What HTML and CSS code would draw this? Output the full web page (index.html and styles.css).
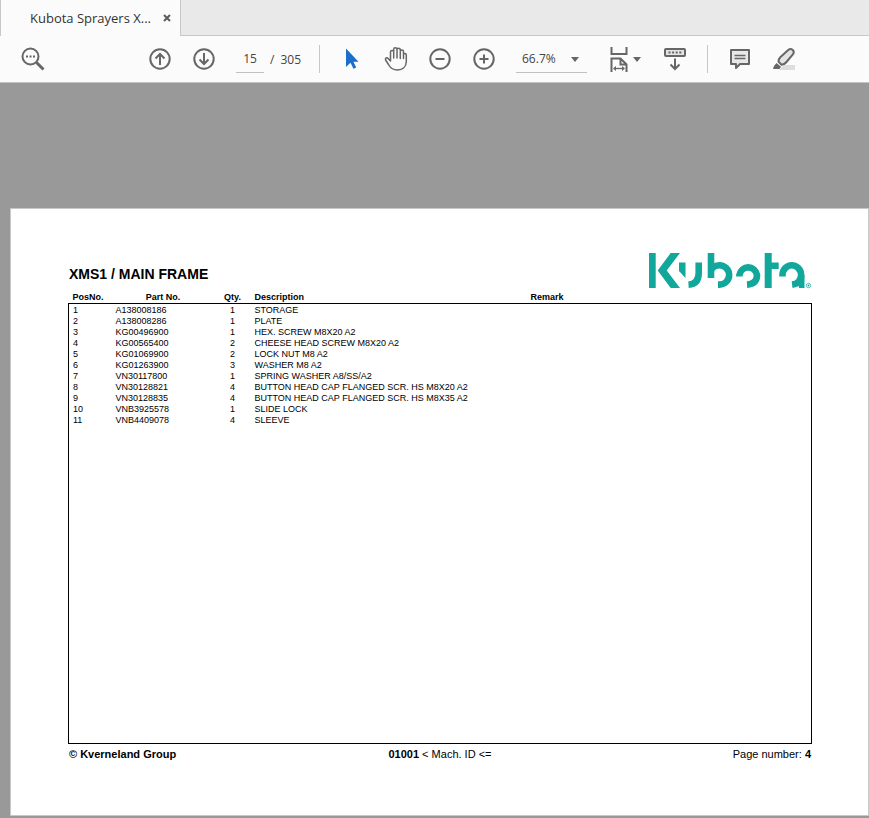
FILE: index.html
```html
<!DOCTYPE html>
<html lang="en">
<head>
    <meta charset="UTF-8">
    <meta name="viewport" content="width=device-width, initial-scale=1.0">
    <title>Kubota Sprayers XMS1</title>
    <link rel="stylesheet" href="styles.css">
</head>
<body>

    <nav class="tabs">
        <div class="tab">
            <a href="#sheet" class="tab-name">Kubota Sprayers X...</a>
            <button class="tab-close" aria-label="Close tab">
                <svg width="8" height="8" viewBox="0 0 8 8"><path d="M1 1l6 6M7 1l-6 6" stroke="#5c5c5c" stroke-width="2"/></svg>
            </button>
        </div>
    </nav>

    <div class="toolbar">
        <button class="tool search" aria-label="Find">
            <svg width="24" height="24" viewBox="0 0 24 24">
                <circle cx="9.500" cy="9.500" r="8"/>
                <path d="M15.500 15.500L22.500 22.500" stroke-width="3"/>
                <path d="M5 9.500h2M8.500 9.500h2M12 9.500h2"/>
            </svg>
        </button>
        <button class="tool" aria-label="Previous page">
            <svg width="24" height="24" viewBox="0 0 24 24"><circle cx="12" cy="12" r="9.700"/><path d="M12 18V7M7.500 11.500L12 7l4.500 4.500"/></svg>
        </button>
        <button class="tool" aria-label="Next page">
            <svg width="24" height="24" viewBox="0 0 24 24"><circle cx="12" cy="12" r="9.700"/><path d="M12 6v11M7.500 12.500L12 17l4.500-4.500"/></svg>
        </button>
        <div class="pager">
            <input type="text" class="page-input" value="15" aria-label="Page">
            <span>/</span>
            <span>305</span>
        </div>
        <span class="separator"></span>
        <button class="tool" aria-label="Select">
            <svg width="24" height="24" viewBox="0 0 24 24"><path d="M6 1.500V20l4.500-4.200 3 6 2.700-1.300-2.800-5.800H18.500z" fill="#1b6ec9" stroke="none"/></svg>
        </button>
        <button class="tool" aria-label="Hand">
            <svg width="24" height="24" viewBox="0 0 24 24">
                <path d="M6.500 14V5a1.500 1.500 0 0 1 3.200 0V11V2.500a1.600 1.600 0 0 1 3.300 0V11V2.800a1.600 1.600 0 0 1 3.300 0V11.500V4.500a1.600 1.600 0 0 1 3.200 0V11.500V8a1.400 1.400 0 0 1 2.800 0V14.500c0 5.500-3.800 8.500-8.800 8.500c-4.500 0-7-2-8.700-5L1.600 13c-.8-2 1.300-2.800 2.500-1.500z" stroke-width="1.500" stroke-linejoin="round"/>
            </svg>
        </button>
        <button class="tool" aria-label="Zoom out">
            <svg width="24" height="24" viewBox="0 0 24 24"><circle cx="12" cy="12" r="9.700"/><path d="M7.500 12h9"/></svg>
        </button>
        <button class="tool" aria-label="Zoom in">
            <svg width="24" height="24" viewBox="0 0 24 24"><circle cx="12" cy="12" r="9.700"/><path d="M7.500 12h9M12 7.500v9"/></svg>
        </button>
        <div class="zoom">
            <select class="zoom-select" aria-label="Zoom level">
                <option>66.7%</option>
                <option>100%</option>
            </select>
            <svg class="caret" width="8" height="5" viewBox="0 0 8 5"><path d="M0 0h8L4 5z" fill="#666" stroke="none"/></svg>
        </div>
        <button class="tool fit" aria-label="Fit width">
            <svg width="18" height="25" viewBox="0 0 18 25">
                <path d="M1.500 0v7h15V0"/>
                <path d="M1.500 25V11.500h9l6 6V25M10.500 11.500v6h6"/>
                <path d="M5 21.500h8" stroke-width="1.300"/>
                <path d="M3 21.500l3-2.500v5zM15 21.500l-3-2.500v5z" fill="#666" stroke="none"/>
            </svg>
            <svg width="8" height="5" viewBox="0 0 8 5"><path d="M0 0h8L4 5z" fill="#666" stroke="none"/></svg>
        </button>
        <button class="tool" aria-label="Show toolbar below">
            <svg width="24" height="24" viewBox="0 0 24 24">
                <rect x="2" y="2" width="20" height="7" rx="1" fill="#e4e4e4"/>
                <path d="M5.500 5.500h13" stroke-dasharray="2 1.600"/>
                <path d="M12 11.500v10M7.500 17.500L12 22l4.500-4.500"/>
            </svg>
        </button>
        <span class="separator"></span>
        <button class="tool" aria-label="Comment">
            <svg width="24" height="24" viewBox="0 0 24 24">
                <path d="M3 3h18v14H12l-4 4v-4H3z" fill="#e8e8e8" stroke-linejoin="round"/>
                <path d="M6.500 8.500h11M6.500 11.500h11" stroke-width="1.300"/>
            </svg>
        </button>
        <button class="tool" aria-label="Highlight">
            <svg width="24" height="24" viewBox="0 0 24 24">
                <path d="M7 23l5-5h11v5z" fill="#dedede" stroke="none"/>
                <path d="M6.500 14.500c0-2 .5-3 2-4.500L16.500 2.800q2-1.500 4 0t.8 4L14 15.500c-1.300 1.500-2.500 2-4.500 2.300z" fill="#e4e4e4" stroke-linejoin="round"/>
                <path d="M4.500 16l4.500 3.800-1.500 2.200H1l1-3z" fill="#666" stroke="none"/>
            </svg>
        </button>
    </div>

    <main class="viewer">
        <section class="sheet" id="sheet">
            <header class="sheet-header">
                <h1>XMS1 / MAIN FRAME</h1>
                <svg class="logo" width="163" height="36" viewBox="0 0 163 36" role="img" aria-label="Kubota">
                    <g fill="#12a79b">
                        <path d="M0 0h6.700v35H0z"/>
                        <path d="M21.700 0H31L17.700 17.500 31 35h-9.300L8.700 17.500z"/>
                        <path d="M30 9.500h6.500V25L30 18z"/>
                        <path d="M115.700 0h7v9.500h7V16h-7v19h-7z"/>
                        <path d="M149 22h6.500v13h-5.500z"/>
                    </g>
                    <g fill="none" stroke="#12a79b" stroke-width="6.600">
                        <path d="M49.700 9.500V20q0 11-10.200 11.700"/>
                        <path d="M62 0v25"/>
                        <path d="M62 17q3-4.700 8.500-4.700a9.600 9.600 0 0 1 0 19.300H69"/>
                        <path d="M90.400 23.500v-1.500a9 9.600 0 0 1 17.600 0q0 9-10 9.600"/>
                        <path d="M133.500 23.500v-1.500a9.200 9.600 0 0 1 18.600 0q0 8.500-9 9.600"/>
                    </g>
                    <circle cx="159.500" cy="32.500" r="2.200" fill="none" stroke="#12a79b" stroke-width=".7"/>
                    <circle cx="159.500" cy="32.500" r=".9" fill="#12a79b"/>
                </svg>
            </header>

            <table class="parts">
                <colgroup>
                    <col class="col-pos">
                    <col class="col-part">
                    <col class="col-qty">
                    <col class="col-desc">
                    <col>
                </colgroup>
                <thead>
                    <tr><th>PosNo.</th><th class="center">Part No.</th><th class="center">Qty.</th><th>Description</th><th>Remark</th></tr>
                </thead>
                <tbody>
                    <tr><td>1</td><td>A138008186</td><td class="center">1</td><td>STORAGE</td><td></td></tr>
                    <tr><td>2</td><td>A138008286</td><td class="center">1</td><td>PLATE</td><td></td></tr>
                    <tr><td>3</td><td>KG00496900</td><td class="center">1</td><td>HEX. SCREW M8X20 A2</td><td></td></tr>
                    <tr><td>4</td><td>KG00565400</td><td class="center">2</td><td>CHEESE HEAD SCREW M8X20 A2</td><td></td></tr>
                    <tr><td>5</td><td>KG01069900</td><td class="center">2</td><td>LOCK NUT M8 A2</td><td></td></tr>
                    <tr><td>6</td><td>KG01263900</td><td class="center">3</td><td>WASHER M8 A2</td><td></td></tr>
                    <tr><td>7</td><td>VN30117800</td><td class="center">1</td><td>SPRING WASHER A8/SS/A2</td><td></td></tr>
                    <tr><td>8</td><td>VN30128821</td><td class="center">4</td><td>BUTTON HEAD CAP FLANGED SCR. HS M8X20 A2</td><td></td></tr>
                    <tr><td>9</td><td>VN30128835</td><td class="center">4</td><td>BUTTON HEAD CAP FLANGED SCR. HS M8X35 A2</td><td></td></tr>
                    <tr><td>10</td><td>VNB3925578</td><td class="center">1</td><td>SLIDE LOCK</td><td></td></tr>
                    <tr><td>11</td><td>VNB4409078</td><td class="center">4</td><td>SLEEVE</td><td></td></tr>
                    <tr class="blank"><td colspan="5"></td></tr>
                </tbody>
            </table>

            <footer class="sheet-footer">
                <b>© Kverneland Group</b>
                <span><b>01001</b> &lt; Mach. ID &lt;=</span>
                <span class="page-number">Page number: <b>4</b></span>
            </footer>
        </section>
    </main>

</body>
</html>
```

FILE: styles.css
```css
*{
    box-sizing: border-box;
    margin: 0;
    padding: 0;
}

body{
    display: flex;
    flex-direction: column;
    min-height: 100vh;
    background-color: #999;
    font-family: "Open Sans", "Noto Sans", sans-serif;
    font-size: 12px;
    color: #444;
}

button{
    border: none;
    background: none;
    cursor: pointer;
}

/* tabs */
.tabs{
    display: flex;
    height: 36px;
    background-color: #e9e9e9;
    border-bottom: 1px solid #c8c8c8;
}

.tab{
    display: flex;
    align-items: center;
    gap: 12px;
    width: 181px;
    height: 36px;
    padding-left: 29px;
    background-color: #fbfbfb;
    border-left: 1px solid #c8c8c8;
    border-right: 1px solid #c8c8c8;
}

.tab-name{
    font-size: 13px;
    color: #333;
    text-decoration: none;
}

.tab-close{
    display: flex;
}

/* toolbar */
.toolbar{
    display: flex;
    align-items: center;
    height: 47px;
    padding-left: 11px;
    background-color: #fbfbfb;
    border-bottom: 1px solid #c4c4c4;
}

.tool{
    display: flex;
    flex: none;
    align-items: center;
    justify-content: center;
    width: 44px;
    height: 44px;
}

.tool svg{
    fill: none;
    stroke: #666;
    stroke-width: 2;
}

.search{
    margin-right: 83px;
}

.pager{
    display: flex;
    align-items: center;
    gap: 6px;
    margin-left: 10px;
    margin-right: 8px;
}

.page-input{
    width: 28px;
    height: 28px;
    border: none;
    border-bottom: 1px solid #c0c0c0;
    background: none;
    font: inherit;
    color: inherit;
    text-align: center;
}

.separator{
    width: 1px;
    height: 28px;
    margin: 0 10px;
    background-color: #c8c8c8;
}

.zoom{
    display: grid;
    align-items: center;
    margin: 0 16px 0 10px;
}

.zoom-select{
    grid-area: 1 / 1;
    width: 71px;
    height: 28px;
    padding-left: 6px;
    border: none;
    border-bottom: 1px solid #c0c0c0;
    background: none;
    appearance: none;
    font: inherit;
    color: inherit;
}

.caret{
    grid-area: 1 / 1;
    justify-self: end;
    margin-right: 8px;
    pointer-events: none;
}

.fit{
    gap: 5px;
    margin-right: 6px;
}

/* document page */
.viewer{
    display: flex;
    flex: 1;
    padding: 125px 0 2px 10px;
}

.sheet{
    display: flex;
    flex: 1;
    flex-direction: column;
    padding: 44px 56px 54px 57px;
    background-color: white;
    border: 1px solid #c8c8c8;
    font-family: "Liberation Sans", Arial, sans-serif;
    font-size: 11px;
    color: black;
}

.sheet-header{
    display: flex;
    justify-content: space-between;
    align-items: flex-end;
}

.sheet-header h1{
    padding: 0 0 7px 1px;
    font-size: 14px;
    line-height: 16px;
}

.parts{
    flex: 1;
    width: 100%;
    margin-top: 3px;
    border-collapse: collapse;
    table-layout: fixed;
    font-size: 9px;
    line-height: 11px;
    text-align: left;
}

.parts tbody{
    border: 1px solid black;
}

.parts tr{
    height: 11px;
}

.parts .blank{
    height: auto;
}

.parts th,
.parts td{
    padding-left: 4px;
    white-space: nowrap;
}

.parts .center{
    padding-left: 1px;
    text-align: center;
}

.parts tbody tr:first-child td{
    padding-top: 1px;
}

.col-pos{
    width: 43px;
}

.col-part{
    width: 102px;
}

.col-qty{
    width: 37px;
}

.col-desc{
    width: 276px;
}

.sheet-footer{
    display: grid;
    grid-template-columns: 1fr auto 1fr;
    margin-top: 4px;
    padding: 0 1px;
    line-height: 13px;
}

.page-number{
    text-align: right;
}
```
